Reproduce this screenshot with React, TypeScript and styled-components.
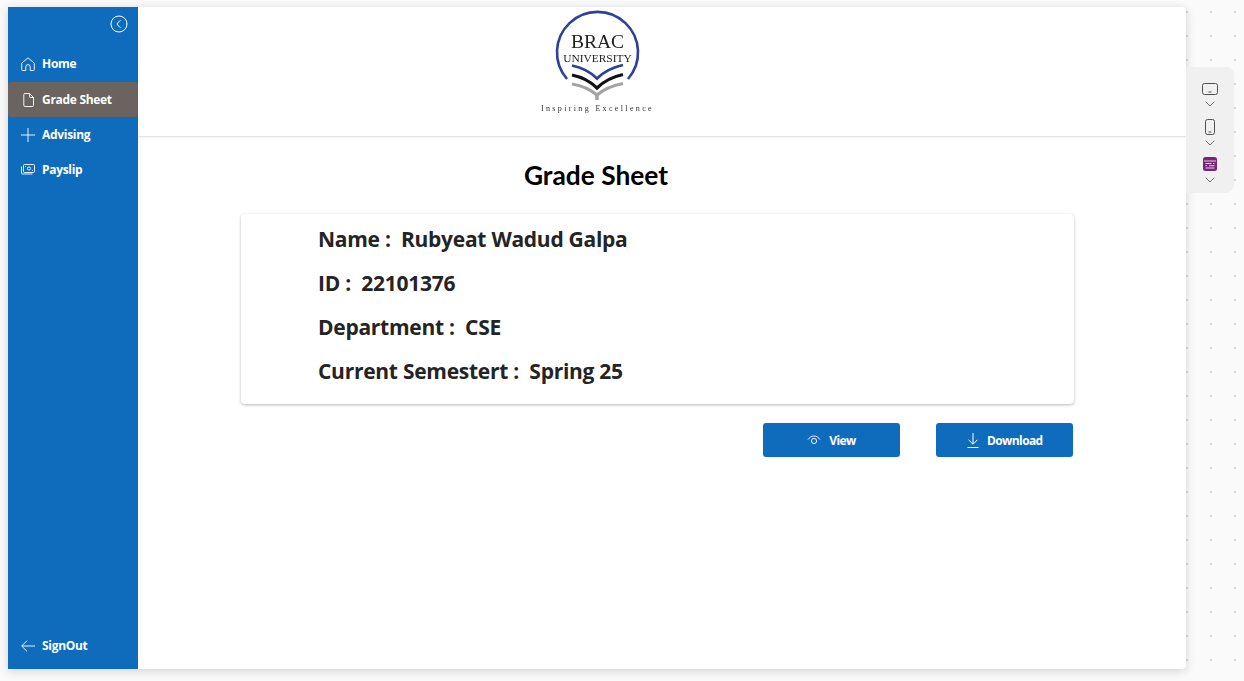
import React from 'react';
import styled, { createGlobalStyle } from 'styled-components';
import { ChevronDown } from 'lucide-react';

const GlobalStyle = createGlobalStyle`
    html, body {
        margin: 0;
        height: 100%;
    }
    body {
        background-color: #fafafa;
        background-image: radial-gradient(circle at center, #d8d8d8 0, #d8d8d8 1px, transparent 1.2px);
        background-size: 24px 24px;
        background-position: -1px 0;
        font-family: "Open Sans", "Liberation Sans", sans-serif;
        overflow: hidden;
    }
    #root {
        height: 100%;
    }
`;

const Stage = styled.div`
    display: flex;
    align-items: flex-start;
    padding: 7px 0 0 8px;
    height: 100%;
    box-sizing: border-box;
`;

const Window = styled.div`
    display: flex;
    width: 1178px;
    height: 662px;
    background: #ffffff;
    border-radius: 0 4px 4px 0;
    box-shadow: 0 2px 10px rgba(0, 0, 0, 0.16);
`;

const Sidebar = styled.nav`
    display: flex;
    flex-direction: column;
    width: 130px;
    flex-shrink: 0;
    background: #0f6cbd;
    color: #ffffff;
`;

const CollapseRow = styled.div`
    display: flex;
    justify-content: flex-end;
    padding: 8px 10px 0 0;
    height: 31px;
`;

const MenuList = styled.div`
    display: flex;
    flex-direction: column;
    flex: 1;
`;

const MenuItem = styled.div<{ $active?: boolean }>`
    display: flex;
    align-items: center;
    gap: 7px;
    height: 35px;
    padding-left: 13px;
    border-radius: 3px;
    background: ${props => (props.$active ? '#6b6360' : 'transparent')};
    font-size: 12px;
    font-weight: 700;
    letter-spacing: -0.3px;
    white-space: nowrap;

    &:first-child {
        margin-bottom: 1px;
    }
`;

const SignOutRow = styled(MenuItem)`
    margin-bottom: 6px;
`;

const IconSlot = styled.span`
    display: flex;
    justify-content: center;
    width: 14px;
`;

const Main = styled.main`
    display: flex;
    flex-direction: column;
    flex: 1;
    min-width: 0;
`;

const Header = styled.header`
    display: flex;
    justify-content: center;
    height: 129px;
    padding: 0 131px 0 0;
    border-bottom: 1px solid #e4e4e4;
    box-shadow: 0 1px 2px rgba(0, 0, 0, 0.06);
`;

const Title = styled.h1`
    margin: 22px 0 22px;
    padding-right: 132px;
    text-align: center;
    font-family: Lato, "Open Sans", sans-serif;
    font-size: 26.3px;
    line-height: 33px;
    font-weight: 700;
    color: #000000;
`;

const Content = styled.section`
    display: flex;
    flex-direction: column;
    align-self: flex-start;
    width: 833px;
    margin-left: 103px;
`;

const InfoCard = styled.div`
    display: flex;
    flex-direction: column;
    gap: 14px;
    box-sizing: border-box;
    height: 190px;
    padding: 10px 0 0 77px;
    background: #ffffff;
    border-radius: 4px;
    box-shadow: 0 1px 3px rgba(0, 0, 0, 0.28);
`;

const InfoLine = styled.div`
    font-size: 21px;
    line-height: 30px;
    font-weight: 700;
    letter-spacing: -0.27px;
    color: #242424;
    white-space: pre;
`;

const Actions = styled.div`
    display: flex;
    justify-content: flex-end;
    gap: 36.4px;
    margin: 19px 0.7px 0 0;
`;

const ActionButton = styled.button`
    display: flex;
    align-items: center;
    justify-content: center;
    gap: 8px;
    width: 137px;
    height: 34px;
    padding: 0;
    border: none;
    border-radius: 3px;
    background: #0f6cbd;
    color: #ffffff;
    font-family: inherit;
    font-size: 12px;
    font-weight: 700;
    letter-spacing: -0.6px;
`;

const ToolRail = styled.aside`
    display: flex;
    flex-direction: column;
    align-items: center;
    box-sizing: border-box;
    width: 48px;
    height: 126px;
    margin-top: 60px;
    padding: 15px 0 0;
    background: #f0f0f0;
    border-radius: 0 8px 8px 0;
`;

const ToolGroup = styled.div<{ $height: number; $gap: number }>`
    display: flex;
    flex-direction: column;
    align-items: center;
    gap: ${props => props.$gap}px;
    height: ${props => props.$height}px;
`;

const Chevron = styled(ChevronDown)`
    color: #6e6e6e;
`;

const LogoSvg = styled.svg`
    filter: blur(0.3px);
`;

const LaptopIcon = () => (
    <svg width="16" height="14" viewBox="0 0 16 14" fill="none" stroke="#505050" strokeWidth="1">
        <rect x="0.5" y="1.5" width="15" height="11" rx="2" />
        <path d="M6.5 10h3" />
    </svg>
);

const PhoneIcon = () => (
    <svg width="10" height="16" viewBox="0 0 10 16" fill="none" stroke="#505050" strokeWidth="1">
        <rect x="0.5" y="0.5" width="9" height="15" rx="2" />
        <path d="M3.5 13h3" />
    </svg>
);

const FormIcon = () => (
    <svg width="14" height="14" viewBox="0 0 14 14">
        <rect width="14" height="14" rx="2.5" fill="#742774" />
        <path d="M1 4h12" stroke="#ffffff" strokeWidth="0.8" />
        <path d="M2.5 6.5h6M10 6.5h1.5M2.5 8.7h1.5M6 8.7h5.5M2.5 11h9" stroke="#ffffff" strokeWidth="0.8" />
    </svg>
);

const BackIcon = () => (
    <svg width="18" height="18" viewBox="0 0 18 18" fill="none" stroke="#ffffff" strokeWidth="1">
        <circle cx="9" cy="9" r="8" />
        <path d="M10.5 5.2L6.8 9l3.7 3.8" />
    </svg>
);

const HomeIcon = () => (
    <svg width="14" height="14" viewBox="0 0 14 14" fill="none" stroke="#ffffff" strokeWidth="0.9">
        <path d="M1.5 13.5a.8.8 0 0 1-.8-.8V6.2L7 .8l6.3 5.4v6.5a.8.8 0 0 1-.8.8H9.2V9.8a2.2 2.2 0 0 0-4.4 0v3.7z" />
    </svg>
);

const FileIcon = () => (
    <svg width="11" height="14" viewBox="0 0 11 14" fill="none" stroke="#ffffff" strokeWidth="0.9">
        <path d="M2 .5h4.5l4 4v7.8a1.2 1.2 0 0 1-1.2 1.2H2A1.2 1.2 0 0 1 .8 12.3V1.7A1.2 1.2 0 0 1 2 .5z" />
        <path d="M6.5.5v3a1 1 0 0 0 1 1h3" />
    </svg>
);

const PlusIcon = () => (
    <svg width="14" height="14" viewBox="0 0 14 14" fill="none" stroke="#ffffff" strokeWidth="0.9">
        <path d="M7 0v14M0 7h14" />
    </svg>
);

const ArrowIcon = () => (
    <svg width="14" height="12" viewBox="0 0 14 12" fill="none" stroke="#ffffff" strokeWidth="0.9">
        <path d="M14 6H.8M6 .7L.7 6 6 11.3" />
    </svg>
);

const PayslipIcon = () => (
    <svg width="14" height="11" viewBox="0 0 14 11" fill="none" stroke="#ffffff" strokeWidth="0.9">
        <rect x="2.5" y="0.5" width="11" height="8" rx="1" />
        <path d="M0.5 2.5v6.5a1 1 0 0 0 1 1h10" />
        <circle cx="8" cy="4.5" r="1.6" />
        <path d="M4 2.5h.8M11.2 6.5h.8" />
    </svg>
);

const EyeIcon = () => (
    <svg width="14" height="10" viewBox="0 0 14 10" fill="none" stroke="#ffffff" strokeWidth="0.9">
        <path d="M1 4.6C2.4 2.4 4.6 1 7 1s4.6 1.4 6 3.6" />
        <circle cx="7" cy="6" r="2.6" />
    </svg>
);

const DownloadIcon = () => (
    <svg width="12" height="15" viewBox="0 0 12 15" fill="none" stroke="#ffffff" strokeWidth="1">
        <path d="M6 0v11M1.6 6.8L6 11.2l4.4-4.4M.5 14.5h11" />
    </svg>
);

const BracLogo = () => (
    <LogoSvg width="124" height="112" viewBox="0 0 124 112" role="img" aria-label="BRAC University">
        <path d="M32 72A40.5 40.5 0 1 1 93 72" fill="none" stroke="#2e3f9e" strokeWidth="2.6" />
        <text x="62.5" y="40.5" textAnchor="middle" fontFamily="Liberation Serif, serif" fontSize="19.5" fill="#222222">BRAC</text>
        <text x="62.5" y="54.5" textAnchor="middle" fontFamily="Liberation Serif, serif" fontSize="11.4" fill="#222222">UNIVERSITY</text>
        <path d="M37 58.5q15 3 25 13q10-10 26-13.5" fill="none" stroke="#2e3f9e" strokeWidth="2.8" />
        <path d="M37 68q15 3 25 13q10-10 26-13.5" fill="none" stroke="#111111" strokeWidth="3.2" />
        <path d="M37 77q15 2.5 25 11q10-8.500 26-11.5" fill="none" stroke="#a3a3a3" strokeWidth="3.2" />
        <path d="M62 88v5" stroke="#a3a3a3" strokeWidth="3.5" />
        <text x="62.5" y="104" textAnchor="middle" fontFamily="Liberation Serif, serif" fontSize="8" letterSpacing="2.35" fill="#333333">Inspiring Excellence</text>
    </LogoSvg>
);

const infoLines = [
    'Name :  Rubyeat Wadud Galpa',
    'ID :  22101376',
    'Department :  CSE',
    'Current Semestert :  Spring 25',
];

const App = () => {
    return (
        <>
            <GlobalStyle />
            <Stage>
                <Window>
                    <Sidebar>
                        <CollapseRow>
                            <BackIcon />
                        </CollapseRow>
                        <MenuList>
                            <MenuItem>
                                <IconSlot><HomeIcon /></IconSlot>
                                Home
                            </MenuItem>
                            <MenuItem $active>
                                <IconSlot><FileIcon /></IconSlot>
                                Grade Sheet
                            </MenuItem>
                            <MenuItem>
                                <IconSlot><PlusIcon /></IconSlot>
                                Advising
                            </MenuItem>
                            <MenuItem>
                                <IconSlot><PayslipIcon /></IconSlot>
                                Payslip
                            </MenuItem>
                        </MenuList>
                        <SignOutRow>
                            <IconSlot><ArrowIcon /></IconSlot>
                            SignOut
                        </SignOutRow>
                    </Sidebar>
                    <Main>
                        <Header>
                            <BracLogo />
                        </Header>
                        <Title>Grade Sheet</Title>
                        <Content>
                            <InfoCard>
                                {infoLines.map(line => (
                                    <InfoLine key={line}>{line}</InfoLine>
                                ))}
                            </InfoCard>
                            <Actions>
                                <ActionButton>
                                    <EyeIcon />
                                    View
                                </ActionButton>
                                <ActionButton>
                                    <DownloadIcon />
                                    Download
                                </ActionButton>
                            </Actions>
                        </Content>
                    </Main>
                </Window>
                <ToolRail>
                    <ToolGroup $height={37} $gap={0}>
                        <LaptopIcon />
                        <Chevron size={16} strokeWidth={1.5} />
                    </ToolGroup>
                    <ToolGroup $height={39} $gap={0}>
                        <PhoneIcon />
                        <Chevron size={16} strokeWidth={1.5} />
                    </ToolGroup>
                    <ToolGroup $height={36} $gap={1}>
                        <FormIcon />
                        <Chevron size={16} strokeWidth={1.5} />
                    </ToolGroup>
                </ToolRail>
            </Stage>
        </>
    );
};

export default App;
